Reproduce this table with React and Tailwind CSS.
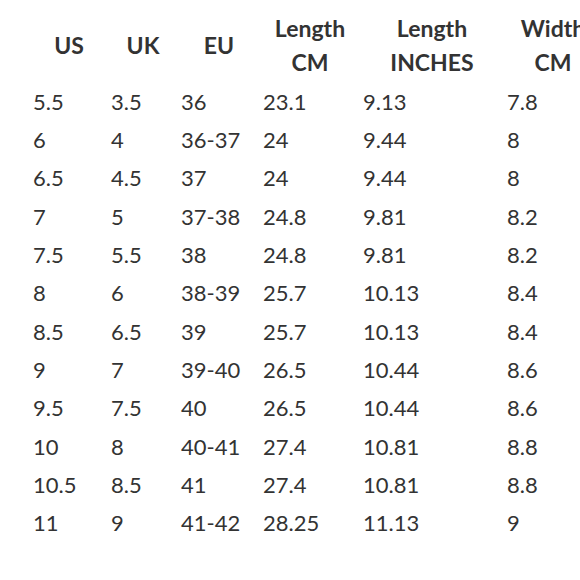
import React from 'react';

const headers = [
  ['US'],
  ['UK'],
  ['EU'],
  ['Length', 'CM'],
  ['Length', 'INCHES'],
  ['Width', 'CM'],
];

const rows = [
  ['5.5', '3.5', '36', '23.1', '9.13', '7.8'],
  ['6', '4', '36-37', '24', '9.44', '8'],
  ['6.5', '4.5', '37', '24', '9.44', '8'],
  ['7', '5', '37-38', '24.8', '9.81', '8.2'],
  ['7.5', '5.5', '38', '24.8', '9.81', '8.2'],
  ['8', '6', '38-39', '25.7', '10.13', '8.4'],
  ['8.5', '6.5', '39', '25.7', '10.13', '8.4'],
  ['9', '7', '39-40', '26.5', '10.44', '8.6'],
  ['9.5', '7.5', '40', '26.5', '10.44', '8.6'],
  ['10', '8', '40-41', '27.4', '10.81', '8.8'],
  ['10.5', '8.5', '41', '27.4', '10.81', '8.8'],
  ['11', '9', '41-42', '28.25', '11.13', '9'],
];

const cols = 'grid grid-cols-[78px_70px_82px_100px_144px_98px]';

export default function App() {
  return (
    <div className="w-[580px] h-[580px] overflow-hidden bg-white text-[#333] font-['Lato','Liberation_Sans',sans-serif]">
      <div className="pl-[30px] w-[610px]">
        <div className={`${cols} pt-[11px] pb-[3px]`}>
          {headers.map((h, i) => (
            <div key={i} className="flex flex-col justify-center items-center text-[23px] font-bold leading-[34.3px]">
              {h.map((line, j) => (
                <span key={j}>{line}</span>
              ))}
            </div>
          ))}
        </div>
        {rows.map((r, i) => (
          <div key={i} className={cols}>
            {r.map((v, j) => (
              <div key={j} className="pl-[3px] text-[22px] leading-[38.35px]">
                {v}
              </div>
            ))}
          </div>
        ))}
      </div>
    </div>
  );
}
